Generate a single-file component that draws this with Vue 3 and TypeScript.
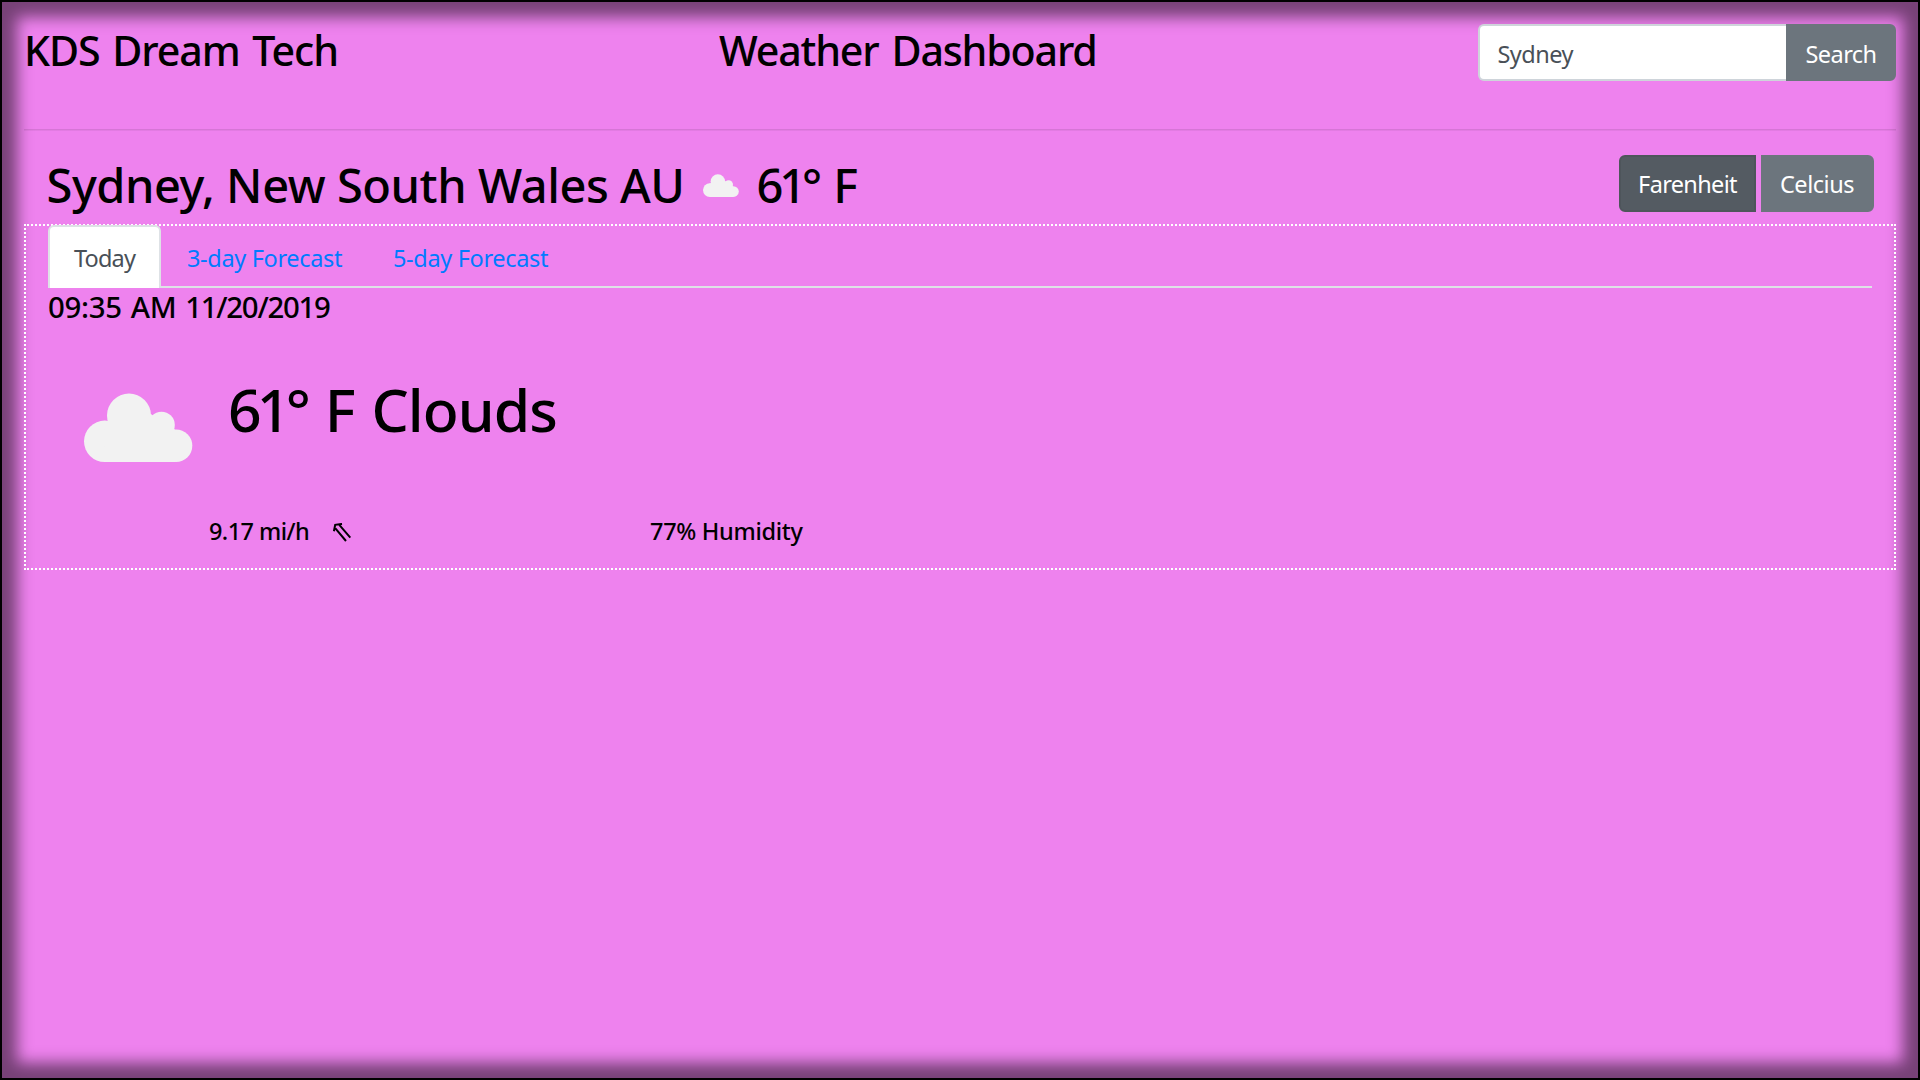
<script setup lang="ts">
import { ref } from 'vue'

type Unit = 'F' | 'C'

const query = ref('Sydney')
const unit = ref<Unit>('F')
const activeTab = ref(0)
const tabs = ['Today', '3-day Forecast', '5-day Forecast']
</script>

<template>
  <div class="page">
    <header class="top">
      <h3 class="brand">KDS Dream Tech</h3>
      <h3 class="title">Weather Dashboard</h3>
      <form class="search" @submit.prevent>
        <input v-model="query" class="field" type="text" />
        <button class="btn go">Search</button>
      </form>
    </header>
    <div class="rule"></div>

    <section class="city">
      <h2 class="place">Sydney, New South Wales AU</h2>
      <svg class="cloud small" viewBox="0 0 109 69">
        <circle cx="20.7" cy="48.3" r="20.7" />
        <circle cx="45" cy="22.5" r="22" />
        <circle cx="77.5" cy="32" r="13.3" />
        <circle cx="92" cy="52.7" r="16.3" />
        <path d="M20 28H26L50 20L67 21L80 32L91 36.5V69H20.7Z" />
      </svg>
      <h2 class="now"><span class="deg">61°</span> F</h2>
      <div class="units">
        <button class="btn far" :class="{ on: unit === 'F' }" @click="unit = 'F'">Farenheit</button>
        <button class="btn cel" :class="{ on: unit === 'C' }" @click="unit = 'C'">Celcius</button>
      </div>
    </section>

    <main class="panel">
      <nav class="tabs">
        <a
          v-for="(tab, i) in tabs"
          :key="tab"
          class="tab"
          :class="{ active: i === activeTab }"
          @click="activeTab = i"
        >{{ tab }}</a>
      </nav>
      <h5 class="stamp">09:35 AM <span class="date">11/20/2019</span></h5>
      <div class="current">
        <svg class="cloud big" viewBox="0 0 109 69">
          <circle cx="20.7" cy="48.3" r="20.7" />
          <circle cx="45" cy="22.5" r="22" />
          <circle cx="77.5" cy="32" r="13.3" />
          <circle cx="92" cy="52.7" r="16.3" />
          <path d="M20 28H26L50 20L67 21L80 32L91 36.5V69H20.7Z" />
        </svg>
        <h1 class="cond"><span class="deg">61°</span> F Clouds</h1>
      </div>
      <div class="details">
        <h6 class="wind">9.17 mi/h</h6>
        <svg class="arrow" viewBox="0 0 20 19">
          <path d="M2.4 5.3L13 18M6.5 2.2L17.3 14.6M0.9 8.2L2.2 1.8L9 0.9" />
        </svg>
        <h6 class="humidity">77% Humidity</h6>
      </div>
    </main>
  </div>
</template>

<style>
body {
  margin: 0;
}
</style>

<style scoped>
* {
  box-sizing: border-box;
}
.page {
  height: 1080px;
  padding: 22px;
  border: 2px solid #000;
  background: violet;
  box-shadow: inset 0 0 15px 15px rgba(0, 0, 0, 0.5);
  font-family: "Segoe UI", "Noto Sans", "Open Sans", sans-serif;
  color: #000;
  overflow: hidden;
}
h1, h2, h3, h5, h6 {
  margin: 0;
  font-weight: 500;
  white-space: nowrap;
}
.top {
  display: grid;
  grid-template-columns: 695px 1fr 418px;
  height: 105px;
}
h3 {
  padding-top: 1px;
  font-size: 41.2px;
  line-height: 50px;
}
.brand {
  letter-spacing: -1.08px;
  word-spacing: 3px;
}
.title {
  letter-spacing: -1.19px;
  word-spacing: 3.5px;
}
.search {
  display: flex;
  height: 57px;
}
.field {
  flex: 1;
  min-width: 0;
  padding: 2px 17.5px 0;
  border: 2px solid #ced4da;
  border-right: 0;
  border-radius: 6px 0 0 6px;
  background: #fff;
  color: #495057;
  font: 400 23.5px "Segoe UI", "Noto Sans", sans-serif;
  letter-spacing: -0.54px;
  outline: 0;
}
.btn {
  height: 57px;
  padding: 0;
  border: 2px solid #6c757d;
  background: #6c757d;
  color: #fff;
  font: 400 23.5px "Segoe UI", "Noto Sans", sans-serif;
}
.btn.on {
  border-color: #4e555b;
  background: #545b62;
}
.go {
  width: 110px;
  padding-top: 2px;
  border-radius: 0 6px 6px 0;
  letter-spacing: -0.58px;
}
.rule {
  height: 2px;
  background: linear-gradient(rgba(0, 0, 0, 0.1) 50%, rgba(0, 0, 0, 0.05) 50%);
}
.city {
  display: flex;
  align-items: flex-start;
  height: 93px;
  padding: 24px 22px 0 22.5px;
}
h2 {
  padding-top: 1px;
  font-size: 47px;
  line-height: 58px;
}
.place {
  width: 656.5px;
  letter-spacing: -0.46px;
}
.cloud {
  flex: none;
  fill: #f2f2f2;
}
.small {
  width: 36px;
  height: 23px;
  margin-top: 19px;
}
.now {
  margin-left: 17.5px;
  letter-spacing: -2.1px;
  word-spacing: 5px;
}
.now .deg {
  letter-spacing: -4.1px;
}
.units {
  display: flex;
  gap: 5px;
  margin-left: auto;
}
.far {
  width: 137px;
  border-radius: 6px 0 0 6px;
  letter-spacing: -0.66px;
}
.cel {
  width: 113px;
  padding-right: 1px;
  border-radius: 0 6px 6px 0;
  letter-spacing: -0.45px;
}
.panel {
  height: 346px;
  padding: 0 22px;
  border: 2px dotted #fff;
}
.tabs {
  display: flex;
  height: 62px;
  border-bottom: 2px solid #dee2e6;
}
.tab {
  display: flex;
  align-items: center;
  height: 63px;
  margin-top: -1px;
  padding: 0 24px;
  border: 2px solid transparent;
  border-bottom: 0;
  color: #007bff;
  font-size: 23.5px;
  letter-spacing: -0.34px;
  white-space: nowrap;
  cursor: pointer;
}
.tab + .tab {
  width: 206px;
}
.tab.active {
  width: 113px;
  border-color: #dee2e6;
  border-radius: 6px 6px 0 0;
  background: #fff;
  color: #495057;
  letter-spacing: -0.83px;
}
.stamp {
  height: 37px;
  font-size: 29.4px;
  line-height: 39px;
  letter-spacing: -0.28px;
  word-spacing: 1.5px;
}
.date {
  letter-spacing: -1.28px;
}
.current {
  display: flex;
  height: 144px;
  padding: 48px 0 0 35.5px;
}
.big {
  width: 109px;
  height: 69px;
  margin-top: 20px;
}
.cond {
  margin-left: 35.5px;
  font-size: 58.8px;
  line-height: 73px;
  letter-spacing: -0.9px;
  word-spacing: 2px;
}
.cond .deg {
  margin-right: 2.5px;
  letter-spacing: -4.8px;
}
.details {
  display: flex;
  height: 76px;
  padding: 48px 0 0 161px;
}
h6 {
  font-size: 23.5px;
  line-height: 28px;
}
.wind {
  width: 124px;
  letter-spacing: -0.57px;
}
.arrow {
  width: 20px;
  height: 19px;
  margin-top: 6px;
  fill: none;
  stroke: #000;
  stroke-width: 2;
}
.humidity {
  margin-left: 297px;
  letter-spacing: -0.3px;
}
</style>
